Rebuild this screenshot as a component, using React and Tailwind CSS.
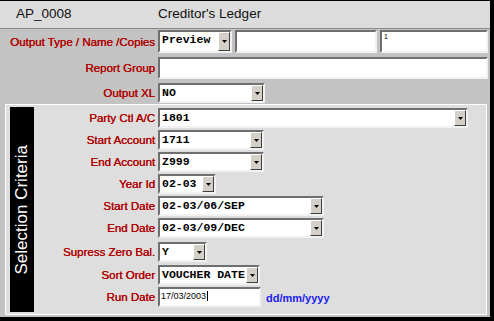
import React from 'react';

const Arrow = () => (
  <svg width="5" height="3" viewBox="0 0 5 3">
    <polygon points="0,0 5,0 2.5,3" fill="#000" />
  </svg>
);

// sunken combo box with a raised drop button
const Select = ({ value, className }) => (
  <div
    className={`flex bg-white border-2 border-t-[#6f6f6f] border-l-[#6f6f6f] border-r-[#f2f2f2] border-b-[#f2f2f2] ${className}`}
  >
    <div className="flex-1 overflow-hidden whitespace-nowrap pl-[2px] pt-[1px] font-['Liberation_Mono',monospace] text-[11.5px] font-bold leading-[13px] text-black">
      {value}
    </div>
    <div className="flex w-[12px] items-center justify-center bg-[#d4d0c8] border border-t-white border-l-white border-r-[#404040] border-b-[#404040]">
      <Arrow />
    </div>
  </div>
);

const Input = ({ children, className }) => (
  <div
    className={`bg-white border-2 border-t-[#6f6f6f] border-l-[#6f6f6f] border-r-[#f2f2f2] border-b-[#f2f2f2] ${className}`}
  >
    {children}
  </div>
);

const Label = ({ children, className }) => (
  <div
    className={`shrink-0 whitespace-nowrap pt-[2px] text-right font-['Liberation_Sans',Arial,sans-serif] text-[11.5px] text-[#b00000] [text-shadow:0.35px_0_0_#b00000] ${className}`}
  >
    {children}
  </div>
);

const App = () => {
  return (
    <div className="h-[321px] w-[494px] overflow-hidden bg-black pt-[1px]">
      <div className="flex h-[316px] w-[490px] flex-col bg-[#c3c3c3]">
        {/* Title */}
        <div className="flex h-[28px] items-center border-b border-b-[#8a8a8a] bg-[#dcdcdc] font-['Liberation_Sans',Arial,sans-serif] text-[13.5px] text-[#111]">
          <span className="ml-[16px] w-[142px]">AP_0008</span>
          <span>Creditor's Ledger</span>
        </div>

        {/* Output options */}
        <div className="mt-[1px] flex h-[23px] items-center">
          <Label className="w-[155px]">Output Type / Name /Copies</Label>
          <Select value="Preview" className="ml-[3px] h-[23px] w-[74px]" />
          <Input className="ml-[3px] h-[23px] w-[142px]" />
          <Input className="ml-[3px] h-[23px] w-[108px]">
            <div className="pl-[2px] font-['Liberation_Sans',Arial,sans-serif] text-[7px] leading-[9px] text-black">1</div>
          </Input>
        </div>
        <div className="mt-[4px] flex h-[22px] items-center">
          <Label className="w-[155px]">Report Group</Label>
          <Input className="ml-[3px] h-[22px] w-[330px]" />
        </div>
        <div className="mt-[4px] flex h-[20px] items-center">
          <Label className="w-[155px]">Output XL</Label>
          <Select value="NO" className="ml-[3px] h-[20px] w-[107px]" />
        </div>

        {/* Selection criteria */}
        <div className="ml-[5px] mt-[1px] flex h-[211px] w-[482px] border border-white bg-[#dedede]">
          <div className="ml-[4px] mt-[2px] flex h-[205px] w-[24px] items-center justify-center bg-black">
            <span className="-rotate-90 whitespace-nowrap font-['Liberation_Sans',Arial,sans-serif] text-[17px] text-white">
              Selection Criteria
            </span>
          </div>
          <div className="flex flex-col pt-[3px]">
            <div className="flex h-[20px] items-center">
              <Label className="w-[121px]">Party Ctl A/C</Label>
              <Select value="1801" className="ml-[3px] h-[20px] w-[310px]" />
            </div>
            <div className="mt-[2px] flex h-[20px] items-center">
              <Label className="w-[121px]">Start Account</Label>
              <Select value="1711" className="ml-[3px] h-[20px] w-[106px]" />
            </div>
            <div className="mt-[2px] flex h-[20px] items-center">
              <Label className="w-[121px]">End Account</Label>
              <Select value="Z999" className="ml-[3px] h-[20px] w-[106px]" />
            </div>
            <div className="mt-[2px] flex h-[20px] items-center">
              <Label className="w-[121px]">Year Id</Label>
              <Select value="02-03" className="ml-[3px] h-[20px] w-[58px]" />
            </div>
            <div className="mt-[2px] flex h-[20px] items-center">
              <Label className="w-[121px]">Start Date</Label>
              <Select value="02-03/06/SEP" className="ml-[3px] h-[20px] w-[166px]" />
            </div>
            <div className="mt-[2px] flex h-[20px] items-center">
              <Label className="w-[121px]">End Date</Label>
              <Select value="02-03/09/DEC" className="ml-[3px] h-[20px] w-[166px]" />
            </div>
            <div className="mt-[4px] flex h-[20px] items-center">
              <Label className="w-[121px]">Supress Zero Bal.</Label>
              <Select value="Y" className="ml-[3px] h-[20px] w-[49px]" />
            </div>
            <div className="mt-[3px] flex h-[20px] items-center">
              <Label className="w-[121px]">Sort Order</Label>
              <Select value="VOUCHER DATE" className="ml-[3px] h-[20px] w-[102px]" />
            </div>
            <div className="mt-[2px] flex h-[20px] items-center">
              <Label className="w-[121px]">Run Date</Label>
              <Input className="ml-[3px] flex h-[20px] w-[103px] items-start">
                <span className="pl-[1px] pt-[2px] font-['Liberation_Sans',Arial,sans-serif] text-[9px] leading-[11px] text-black">
                  17/03/2003
                </span>
                <span className="ml-[1px] mt-[2px] h-[10px] w-[1px] bg-black" />
              </Input>
              <span className="ml-[5px] pt-[2px] font-['Liberation_Sans',Arial,sans-serif] text-[11px] font-bold text-[#1c1cf0]">
                dd/mm/yyyy
              </span>
            </div>
          </div>
        </div>
      </div>
    </div>
  );
};

export default App;
